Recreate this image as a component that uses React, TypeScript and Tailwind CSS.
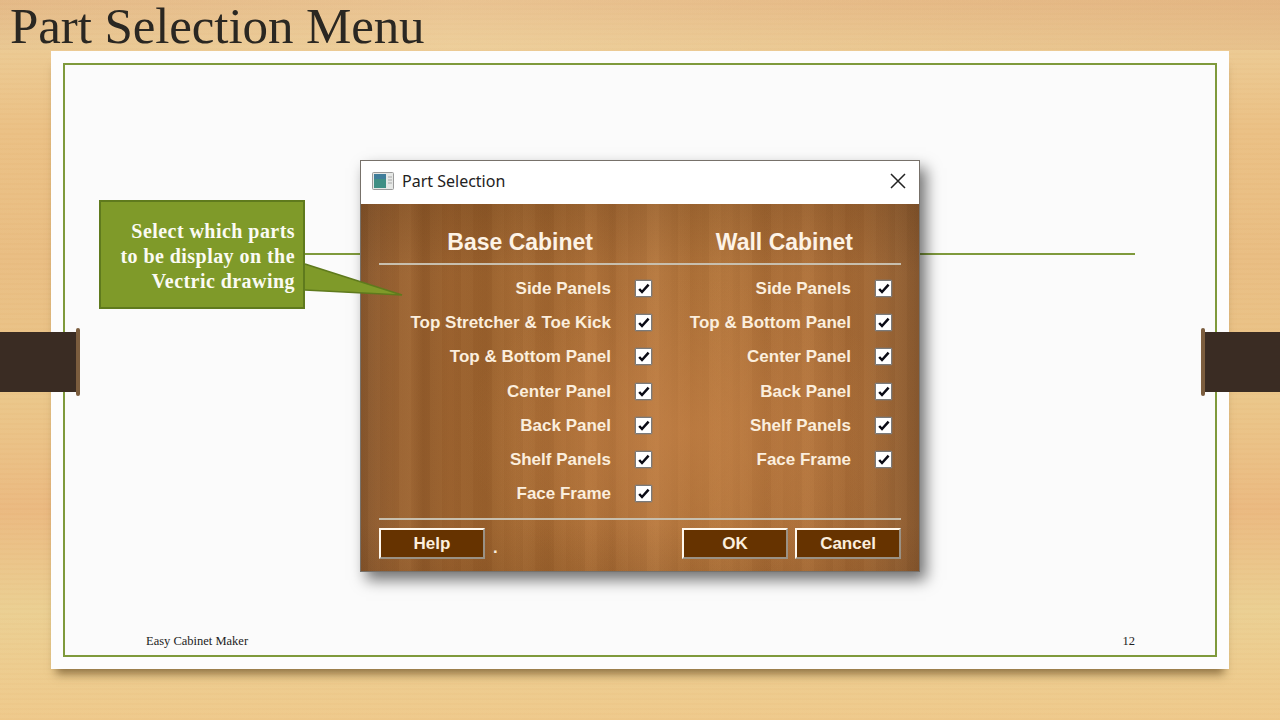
const baseRows = ["Side Panels", "Top Stretcher & Toe Kick", "Top & Bottom Panel", "Center Panel", "Back Panel", "Shelf Panels", "Face Frame"];
const wallRows = ["Side Panels", "Top & Bottom Panel", "Center Panel", "Back Panel", "Shelf Panels", "Face Frame"];

function Check() {
  return (
    <span className="flex h-[17px] w-[17px] items-center justify-center rounded-[1px] border border-[#7a7a7a] bg-white shadow-[0_0_0_0.5px_rgba(120,120,120,0.6)]">
      <svg width="14" height="13" viewBox="0 0 14 13" fill="none">
        <path d="M2.2 7 L5 10 L11.6 2.6" stroke="#0a0a14" strokeWidth="2.5" />
      </svg>
    </span>
  );
}

function Column({ rows, labelWidth }: { rows: string[]; labelWidth: string }) {
  return (
    <div className="flex flex-col">
      {rows.map((r) => (
        <div key={r} className="flex h-[34.3px] items-center gap-[24px]">
          <span className={`${labelWidth} whitespace-nowrap text-right text-[17px] font-bold leading-none text-[#fbeedd]`}>{r}</span>
          <Check />
        </div>
      ))}
    </div>
  );
}

function Btn({ label, w }: { label: string; w: string }) {
  return (
    <div className={`flex h-[31px] ${w} items-center justify-center border-2 border-t-[#fff8ee] border-l-[#fff8ee] border-r-[#9a9184] border-b-[#9a9184] bg-[#663300] text-[17px] font-bold text-[#fbeedd]`}>
      {label}
    </div>
  );
}

export default function App() {
  return (
    <div className="relative h-[720px] w-[1280px] overflow-hidden bg-[linear-gradient(180deg,#e6b985_0px,#ecca93_46px,#ebc084_130px,#e9bd82_260px,#ebc689_400px,#ebb980_510px,#ebcf92_610px,#efc98b_720px)] font-['Liberation_Serif',serif]">
      <div className="absolute inset-0 bg-[repeating-linear-gradient(0deg,rgba(190,130,60,0.025)_0px,rgba(190,130,60,0.025)_2px,rgba(255,240,210,0.025)_2px,rgba(255,240,210,0.025)_5px)]" />
      <div className="absolute inset-x-0 top-0 h-[50px] bg-[linear-gradient(90deg,rgba(214,180,140,0.15),rgba(240,215,170,0.3)_35%,rgba(226,185,135,0.2)_70%,rgba(222,175,125,0.35))]" />

      <h1 className="relative h-[51px] pl-[10px] pt-[1px] text-[51px] font-normal leading-[50px] tracking-[-0.1px] text-[#2a2722]">Part Selection Menu</h1>

      <div className="relative ml-[51px] h-[618px] w-[1178px] bg-[#fdfdfd] pl-[12px] pt-[12px] shadow-[0_10px_9px_-5px_rgba(90,65,25,0.65)]">
        <div className="relative h-[594px] w-[1154px] border-2 border-[#7f9a3c] bg-[#fbfbfb]">
          {/* decorative rule, strictly behind the dialog */}
          <div className="absolute left-[239px] top-[188px] h-[2px] w-[831px] bg-[#7f9a3c]" />

          {/* dialog */}
          <div className="absolute left-[295px] top-[95px] flex h-[412px] w-[560px] flex-col border border-[#77716a] shadow-[6px_8px_14px_rgba(0,0,0,0.55)]">
            <div className="flex h-[43px] shrink-0 items-center bg-white pb-[3px] pl-[11px] pr-[12px] font-['Noto_Sans',sans-serif]">
              <svg width="22" height="18" viewBox="0 0 22 18">
                <rect x="0.5" y="0.5" width="21" height="17" rx="1" fill="#e6e8e6" stroke="#9a9a9a" />
                <rect x="2" y="2" width="12" height="14" fill="#3f8f84" />
                <rect x="2" y="2" width="12" height="5" fill="#3f7d9a" />
                <path d="M16 5h4M16 8h4M16 11h4" stroke="#a8a8a8" />
              </svg>
              <span className="ml-[8px] text-[16px] leading-none text-[#222]">Part Selection</span>
              <svg className="ml-auto" width="18" height="18" viewBox="0 0 18 18" fill="none">
                <path d="M2 2 L16 16 M16 2 L2 16" stroke="#222" strokeWidth="1.5" />
              </svg>
            </div>
            <div className="relative flex-1 bg-[linear-gradient(90deg,#8c5b31_0%,#98602f_7%,#a0652f_25%,#aa6d35_38%,#b0723a_48%,#b2743a_62%,#ad6f38_78%,#a56a36_90%,#87582f_100%)] px-[18px] font-['Liberation_Sans',sans-serif]">
              <div className="absolute inset-0 bg-[linear-gradient(90deg,rgba(70,35,5,0.08)_0%,rgba(70,35,5,0)_3%,rgba(255,210,150,0.05)_9%,rgba(70,35,5,0.09)_11%,rgba(70,35,5,0)_16%,rgba(70,35,5,0.08)_22%,rgba(255,210,150,0.06)_28%,rgba(70,35,5,0.07)_33%,rgba(255,210,150,0.04)_41%,rgba(70,35,5,0.07)_45%,rgba(255,210,150,0.08)_53%,rgba(70,35,5,0.05)_59%,rgba(255,210,150,0.06)_66%,rgba(70,35,5,0.07)_72%,rgba(255,210,150,0.05)_80%,rgba(70,35,5,0.06)_87%,rgba(255,210,150,0.04)_94%,rgba(70,35,5,0)_100%)]" />
              <div className="absolute inset-0 bg-[repeating-linear-gradient(90deg,rgba(70,35,5,0.035)_0px,rgba(70,35,5,0.035)_7px,rgba(255,210,150,0.025)_7px,rgba(255,210,150,0.025)_19px,rgba(70,35,5,0.02)_19px,rgba(70,35,5,0.02)_31px)]" />
              <div className="absolute inset-0 bg-[radial-gradient(ellipse_at_58%_62%,rgba(205,135,75,0.45)_0%,rgba(205,135,75,0)_48%)]" />
              <div className="absolute inset-0 bg-[linear-gradient(180deg,rgba(60,30,5,0.16)_0px,rgba(60,30,5,0)_70px,rgba(0,0,0,0)_320px,rgba(70,35,5,0.1)_368px)]" />
              <div className="relative flex h-[59px] items-end pb-[8px] text-[23px] font-bold leading-[26px] text-[#fdf3e6]">
                <span className="w-[214px] text-right">Base Cabinet</span>
                <span className="w-[260px] text-right">Wall Cabinet</span>
              </div>
              <div className="relative h-[2px] bg-[#c8bfae]" />
              <div className="relative mt-[6px] flex h-[247px]">
                <div className="w-[273px] shrink-0">
                  <Column rows={baseRows} labelWidth="w-[232px]" />
                </div>
                <Column rows={wallRows} labelWidth="w-[199px]" />
              </div>
              <div className="relative h-[2px] bg-[#c8bfae]" />
              <div className="relative mt-[8px] flex items-start">
                <Btn label="Help" w="w-[106px]" />
                <span className="ml-[8px] mt-[7px] text-[17px] font-bold leading-[26px] text-[#fbeedd]">.</span>
                <div className="ml-auto flex gap-[7px]">
                  <Btn label="OK" w="w-[106px]" />
                  <Btn label="Cancel" w="w-[106px]" />
                </div>
              </div>
            </div>
          </div>

          {/* callout */}
          <div className="absolute left-[34px] top-[135px] flex h-[109px] w-[206px] items-center justify-end border-2 border-[#5f7a1d] bg-[#7f9a29] pr-[8px] pt-[4px] text-right text-[20px] font-bold leading-[25.3px] tracking-[0.45px] text-[#fbfbf3]">
            <span>Select which parts<br />to be display on the<br />Vectric drawing</span>
          </div>
          <svg className="absolute left-[238px] top-[197px]" width="104" height="38" viewBox="0 0 104 38">
            <path d="M2 2 L99 33 L2 28 Z" fill="#7f9a29" />
            <path d="M2 2 L99 33 L2 28" fill="none" stroke="#5f7a1d" strokeWidth="1.5" />
          </svg>

          {/* footer */}
          <div className="absolute bottom-[7px] left-[81px] right-[80px] flex justify-between text-[12.5px] leading-[14px] text-[#222]">
            <span>Easy Cabinet Maker</span>
            <span>12</span>
          </div>
        </div>

        {/* straps */}
        <div className="absolute -left-[51px] top-[277px] flex items-center">
          <div className="h-[60px] w-[76px] bg-[#3a2c23]" />
          <div className="h-[68px] w-[4px] rounded-full bg-[#7b5d3e]" />
        </div>
        <div className="absolute -right-[51px] top-[277px] flex items-center">
          <div className="h-[68px] w-[4px] rounded-full bg-[#7b5d3e]" />
          <div className="h-[60px] w-[75px] bg-[#3a2c23]" />
        </div>
      </div>
    </div>
  );
}
